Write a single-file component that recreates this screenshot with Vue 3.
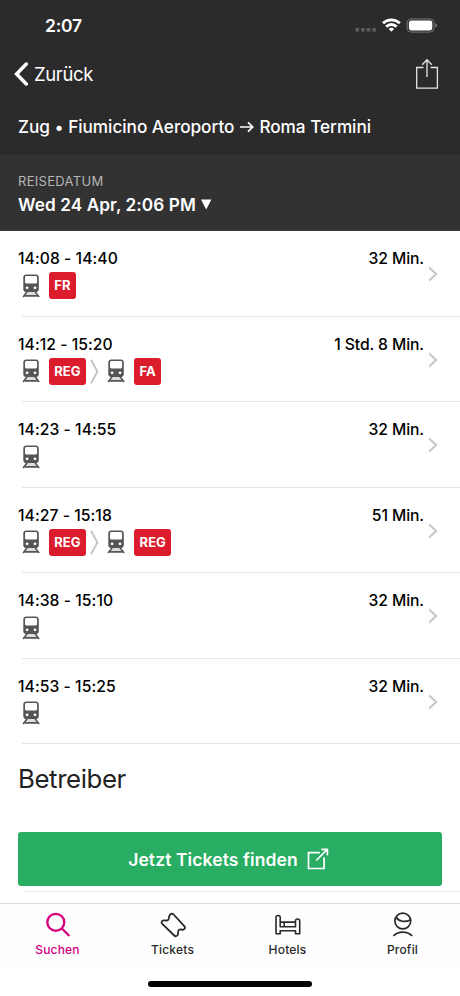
<script setup>
const trips = [
  { time: '14:08 - 14:40', duration: '32 Min.', legs: ['FR'] },
  { time: '14:12 - 15:20', duration: '1 Std. 8 Min.', legs: ['REG', 'FA'] },
  { time: '14:23 - 14:55', duration: '32 Min.', legs: [''] },
  { time: '14:27 - 15:18', duration: '51 Min.', legs: ['REG', 'REG'] },
  { time: '14:38 - 15:10', duration: '32 Min.', legs: [''] },
  { time: '14:53 - 15:25', duration: '32 Min.', legs: [''] },
]
const tabs = [
  { id: 'search', label: 'Suchen' },
  { id: 'tickets', label: 'Tickets' },
  { id: 'hotels', label: 'Hotels' },
  { id: 'profile', label: 'Profil' },
]
</script>

<template>
  <div class="screen">
    <header class="top">
      <div class="status">
        <span class="clock">2:07</span>
        <svg class="signal" width="84" height="16" viewBox="0 0 84 16">
          <g fill="#5c5c5c"><rect x="1.5" y="11" width="3.6" height="3.6" /><rect x="7.1" y="11" width="3.6" height="3.6" /><rect x="12.7" y="11" width="3.6" height="3.6" /><rect x="18.3" y="11" width="3.6" height="3.6" /></g>
          <g fill="none" stroke="#fff" stroke-width="2.8">
            <path d="M29 6.3a12 12 0 0 1 16.800 0" />
            <path d="M32.200 9.700a7.300 7.300 0 0 1 10.400 0" />
          </g>
          <path d="M34.700 12a3.900 3.900 0 0 1 5.400 0l-2.700 2.700z" fill="#fff" />
          <rect x="53.200" y="1.900" width="26.800" height="13.200" rx="4" fill="none" stroke="#777" />
          <rect x="54.900" y="3.500" width="23.400" height="10" rx="2.400" fill="#fff" />
          <path d="M81.300 6.300c2.200.7 2.200 3.700 0 4.400z" fill="#777" />
        </svg>
      </div>
      <nav class="nav">
        <button class="back">
          <svg width="15" height="24" viewBox="0 0 15 24"><path d="M12.300 2 2.600 12l9.700 10" fill="none" stroke="#fff" stroke-width="3.500" stroke-linecap="round" stroke-linejoin="miter" /></svg>
          <span>Zurück</span>
        </button>
        <svg class="share" width="24" height="32" viewBox="0 0 24 32"><path d="M8.500 9.500H1.700v20.600h20.700V9.500h-6.800M12 19V2M7.200 6.700 12 1.800l4.800 4.900" fill="none" stroke="#e5e5e5" stroke-width="1.300" /></svg>
      </nav>
      <h1 class="route">
        <span>Zug • Fiumicino Aeroporto</span>
        <svg width="14" height="12" viewBox="0 0 14 12"><path d="M0 6h12.500M8 1.300 12.700 6 8 10.700" fill="none" stroke="#fff" stroke-width="1.700" /></svg>
        <span class="dest">Roma Termini</span>
      </h1>
    </header>

    <section class="date">
      <div class="date-label">REISEDATUM</div>
      <div class="date-value">
        <span>Wed 24 Apr, 2:06 PM</span>
        <svg width="11" height="11" viewBox="0 0 11 11"><path d="M0 .5h10.400L5.200 10.500z" fill="#fff" /></svg>
      </div>
    </section>

    <ul class="trips">
      <li v-for="trip in trips" :key="trip.time" class="trip">
        <div class="trip-main">
          <div class="times"><span>{{ trip.time }}</span><span class="duration">{{ trip.duration }}</span></div>
          <div class="legs">
            <template v-for="(leg, i) in trip.legs" :key="i">
              <svg v-if="i > 0" class="sep" width="9" height="25" viewBox="0 0 9 25"><path d="M1 .8 7.400 12.500 1 24.200" fill="none" stroke="#c4c4c4" stroke-width="1.900" /></svg>
              <svg class="train" width="18" height="24" viewBox="0 0 18 24">
                <path d="M4.500 18h9.500l2.500 4H2z" fill="#ddd" />
                <path fill="#555" fill-rule="evenodd" d="M4.300.5h9.500c1.800 0 3 1.200 3 3v11.800c0 1.500-1.200 2.700-2.700 2.700H4C2.500 18 1.300 16.800 1.300 15.300V3.500c0-1.800 1.200-3 3-3zM4.500 2.100c-.9 0-1.500.6-1.500 1.500v4.600c0 .7.500 1.200 1.200 1.200h9.700c.7 0 1.200-.5 1.200-1.200V3.600c0-.9-.6-1.500-1.500-1.500zM5.100 12.400a1.400 1.400 0 1 0 0 2.800 1.400 1.400 0 0 0 0-2.800zm7.900 0a1.400 1.400 0 1 0 0 2.800 1.400 1.400 0 0 0 0-2.800z" />
                <path d="M5.100 17.800 1.100 22.900M13.100 17.800l4 5.100M2.800 21.900h12.700" stroke="#555" stroke-width="1.600" fill="none" />
              </svg>
              <span v-if="leg" class="badge">{{ leg }}</span>
            </template>
          </div>
        </div>
        <svg class="disclosure" width="10" height="16" viewBox="0 0 10 16"><path d="M1.200 1.500 8.200 8l-7 6.500" fill="none" stroke="#c4c4c6" stroke-width="1.900" /></svg>
      </li>
    </ul>

    <section class="operators">
      <h2>Betreiber</h2>
      <button class="cta">
        <span>Jetzt Tickets finden</span>
        <svg width="22" height="22" viewBox="0 0 22 22"><path d="M12.800 4.600H1.500v15.900h15.600V9.200M9.200 12.500 20 1.700M14.300 1.300h6.100v6.100" fill="none" stroke="#fff" stroke-width="1.700" stroke-linejoin="round" /></svg>
      </button>
      <div class="rule"></div>
    </section>

    <nav class="tabs">
      <a v-for="tab in tabs" :key="tab.id" class="tab" :class="{ active: tab.id === 'search' }">
        <svg width="28" height="28" viewBox="0 0 28 28" fill="none" stroke="currentColor" stroke-width="1.800" stroke-linejoin="round">
          <g v-if="tab.id === 'search'" stroke-width="2.300"><circle cx="11.800" cy="11.300" r="8.500" /><path d="m17.900 17.500 7.500 7.500" /></g>
          <path v-else-if="tab.id === 'tickets'" d="M11.200 3.500Q12.800 1.800 14.600 3.500L25.500 15.300Q26.600 17 25 18.300C23.300 19.600 21.700 17.700 19.900 18.900C18 20.300 19.800 22.200 18.700 24Q17 26.200 15.200 24.500L3 12.700Q1.900 11.200 3.300 9.800C5 8.400 7.300 10.500 9 9C10.700 7.400 9.300 5.400 11.200 3.500Z" />
          <g v-else-if="tab.id === 'hotels'" stroke-width="1.600"><path d="M2 22.800V6.300C2 3.800 6.200 3.800 6.200 6.300v9.400h15.300V9.800c0-2.400 4.200-2.400 4.200 0v13h-4.200v-3.100H6.200v3.100zM6.200 11.100h15.300M10.200 11.100v4.600M6.200 15.700h15.300" /></g>
          <g v-else stroke-width="1.700"><circle cx="13.800" cy="10" r="7.900" /><path d="M7.200 6.200c2.800 4.500 8.600 5.300 14.100 2.700M4.400 24.800c5.200-4.900 13.600-4.900 18.800 0" /></g>
        </svg>
        <span>{{ tab.label }}</span>
      </a>
    </nav>
    <div class="home"><i></i></div>
  </div>
</template>

<style>
body { background: #fff; }
</style>

<style scoped>
* { box-sizing: border-box; }
.screen { width: 460px; height: 996px; display: flex; flex-direction: column; overflow: hidden; background: #fff; color: #000; font-family: Inter, "Liberation Sans", sans-serif; }
svg { display: block; flex: none; }
button { font: inherit; border: 0; padding: 0; background: none; color: inherit; }
.top { height: 155px; flex: none; background: #2b2b2b; color: #fff; }
.status { height: 51px; display: flex; justify-content: space-between; padding: 17px 22px 0 45px; }
.clock { font-size: 17.500px; line-height: 18px; font-weight: 600; letter-spacing: -.25px; }
.nav { height: 46px; display: flex; justify-content: space-between; padding: 7px 21px 0 14px; }
.back { display: flex; align-items: center; height: 32px; gap: 5px; font-size: 18.5px; line-height: 22px; letter-spacing: -.35px; }
.route { margin: 0; padding: 16px 18px 0; display: flex; align-items: center; font-size: 17.200px; line-height: 28px; font-weight: 500; letter-spacing: -.03px; }
.route svg { margin: 0 5px 0 6px; }
.date { height: 76px; flex: none; background: #323233; color: #fff; padding: 17px 18px; border-bottom: 1px solid #3f3f40; }
.date-label { font-size: 13px; line-height: 18px; letter-spacing: .3px; color: #b5b5b5; }
.date-value { display: flex; align-items: center; gap: 5px; font-size: 17.200px; line-height: 29px; font-weight: 600; letter-spacing: .08px; }
.trips { list-style: none; margin: 0; padding: 0; }
.trip { height: 85.5px; display: flex; padding: 17px 22px 0 18px; background: linear-gradient(#e7e7e7, #e7e7e7) 22px 100% / 100% 1px no-repeat; }
.trip-main { flex: 1; }
.times { display: flex; justify-content: space-between; font-size: 15.700px; line-height: 21px; font-weight: 500; letter-spacing: .05px; }
.duration { letter-spacing: -.1px; }
.legs { height: 27px; margin-top: 3px; display: flex; align-items: center; }
.train { margin: 0 9px 0 4px; }
.badge { height: 27px; padding: 0 5.300px; border-radius: 3px; background: #da1c2c; color: #fff; font-size: 13px; line-height: 27px; font-weight: 700; }
.sep { margin: 0 5px 0 4px; }
.sep + .train { margin-left: 3.500px; }
.disclosure { margin: 18px 0 0 4px; }
.operators { flex: none; height: 159px; padding: 18px 18px 0; }
h2 { margin: 0; color: #222; font-size: 25.800px; line-height: 34px; font-weight: 400; letter-spacing: -.4px; }
.cta { width: 424px; height: 54px; margin-top: 36px; padding-right: 3px; border-radius: 3px; background: #28ad62; color: #fff; display: flex; align-items: center; justify-content: center; gap: 9px; font-size: 17.500px; font-weight: 600; letter-spacing: .1px; }
.rule { height: 1px; margin: 5px -18px 0 6px; background: #ececec; }
.tabs { height: 66px; flex: none; border-top: 1px solid #dedede; display: grid; grid-template-columns: repeat(4, 1fr); background: #fefefe; }
.tab { display: flex; flex-direction: column; align-items: center; padding-top: 7px; color: #292929; font-size: 12px; line-height: 16px; font-weight: 500; letter-spacing: .2px; gap: 3px; }
.active { color: #d6007f; }
.home { display: flex; justify-content: center; padding-top: 12px; }
.home i { width: 164px; height: 6px; border-radius: 3px; background: #000; }
</style>
